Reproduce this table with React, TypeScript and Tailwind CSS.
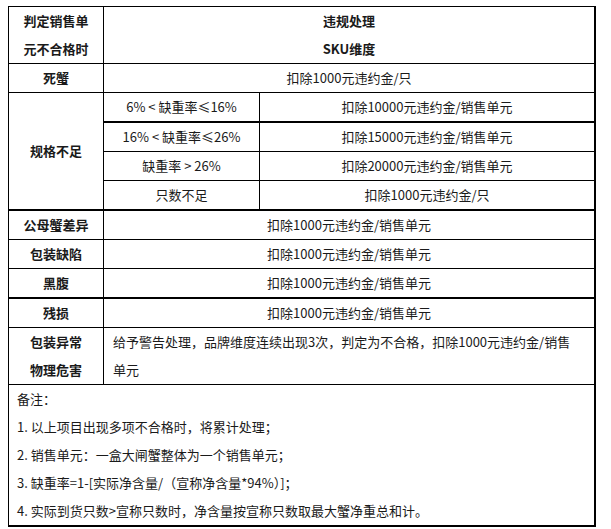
const rules = [
  { range: '6% < 缺重率≤16%', fine: '扣除10000元违约金/销售单元', thick: true },
  { range: '16% < 缺重率≤26%', fine: '扣除15000元违约金/销售单元' },
  { range: '缺重率 > 26%', fine: '扣除20000元违约金/销售单元' },
  { range: '只数不足', fine: '扣除1000元违约金/只', thick: true },
];

const simpleRows = [
  { name: '公母蟹差异', fine: '扣除1000元违约金/销售单元' },
  { name: '包装缺陷', fine: '扣除1000元违约金/销售单元' },
  { name: '黑腹', fine: '扣除1000元违约金/销售单元', thick: true },
  { name: '残损', fine: '扣除1000元违约金/销售单元' },
];

const notes = [
  '备注：',
  '1. 以上项目出现多项不合格时，将累计处理；',
  '2. 销售单元：一盒大闸蟹整体为一个销售单元；',
  '3. 缺重率=1-[实际净含量/（宣称净含量*94%）]；',
  '4. 实际到货只数>宣称只数时，净含量按宣称只数取最大蟹净重总和计。',
];

const cell = 'border border-black p-0 align-middle';

export default function App() {
  return (
    <div className="min-h-screen bg-white pl-2 pt-1.5">
      <table
        className="table-fixed border-collapse w-[588px] text-[13px] leading-[28px] text-[#1a1a1a]"
        style={{ fontFamily: '"Noto Sans CJK SC", "Noto Sans", sans-serif' }}
      >
        <colgroup>
          <col className="w-[95px]" />
          <col className="w-[156px]" />
          <col />
        </colgroup>
        <tbody>
          {/* Header */}
          <tr>
            <td className={`${cell} text-center font-bold`}>
              判定销售单
              <br />
              元不合格时
            </td>
            <td colSpan={2} className={`${cell} border-r-2 text-center font-bold`}>
              <div>违规处理</div>
              <div>SKU维度</div>
            </td>
          </tr>

          <tr>
            <td className={`${cell} text-center font-bold`}>死蟹</td>
            <td colSpan={2} className={`${cell} border-r-2 text-center`}>
              扣除1000元违约金/只
            </td>
          </tr>

          {/* 规格不足 */}
          {rules.map((r, i) => (
            <tr key={r.range}>
              {i === 0 && (
                <td rowSpan={4} className={`${cell} border-b-2 text-center font-bold`}>
                  规格不足
                </td>
              )}
              <td className={`${cell} text-center ${r.thick ? 'border-b-2' : ''}`}>{r.range}</td>
              <td className={`${cell} border-r-2 text-center ${r.thick ? 'border-b-2' : ''}`}>
                {r.fine}
              </td>
            </tr>
          ))}

          {simpleRows.map((r) => (
            <tr key={r.name}>
              <td className={`${cell} text-center font-bold ${r.thick ? 'border-b-2' : ''}`}>
                {r.name}
              </td>
              <td
                colSpan={2}
                className={`${cell} border-r-2 text-center ${r.thick ? 'border-b-2' : ''}`}
              >
                {r.fine}
              </td>
            </tr>
          ))}

          <tr>
            <td className={`${cell} text-center font-bold`}>
              包装异常
              <br />
              物理危害
            </td>
            <td colSpan={2} className={`${cell} border-r-2 pl-[9px] pr-[18px]`}>
              给予警告处理，品牌维度连续出现3次，判定为不合格，扣除1000元违约金/销售单元
            </td>
          </tr>

          {/* Notes */}
          <tr>
            <td colSpan={3} className={`${cell} border-r-2 border-b-2 px-2`}>
              {notes.map((n) => (
                <div key={n}>{n}</div>
              ))}
            </td>
          </tr>
        </tbody>
      </table>
    </div>
  );
}
